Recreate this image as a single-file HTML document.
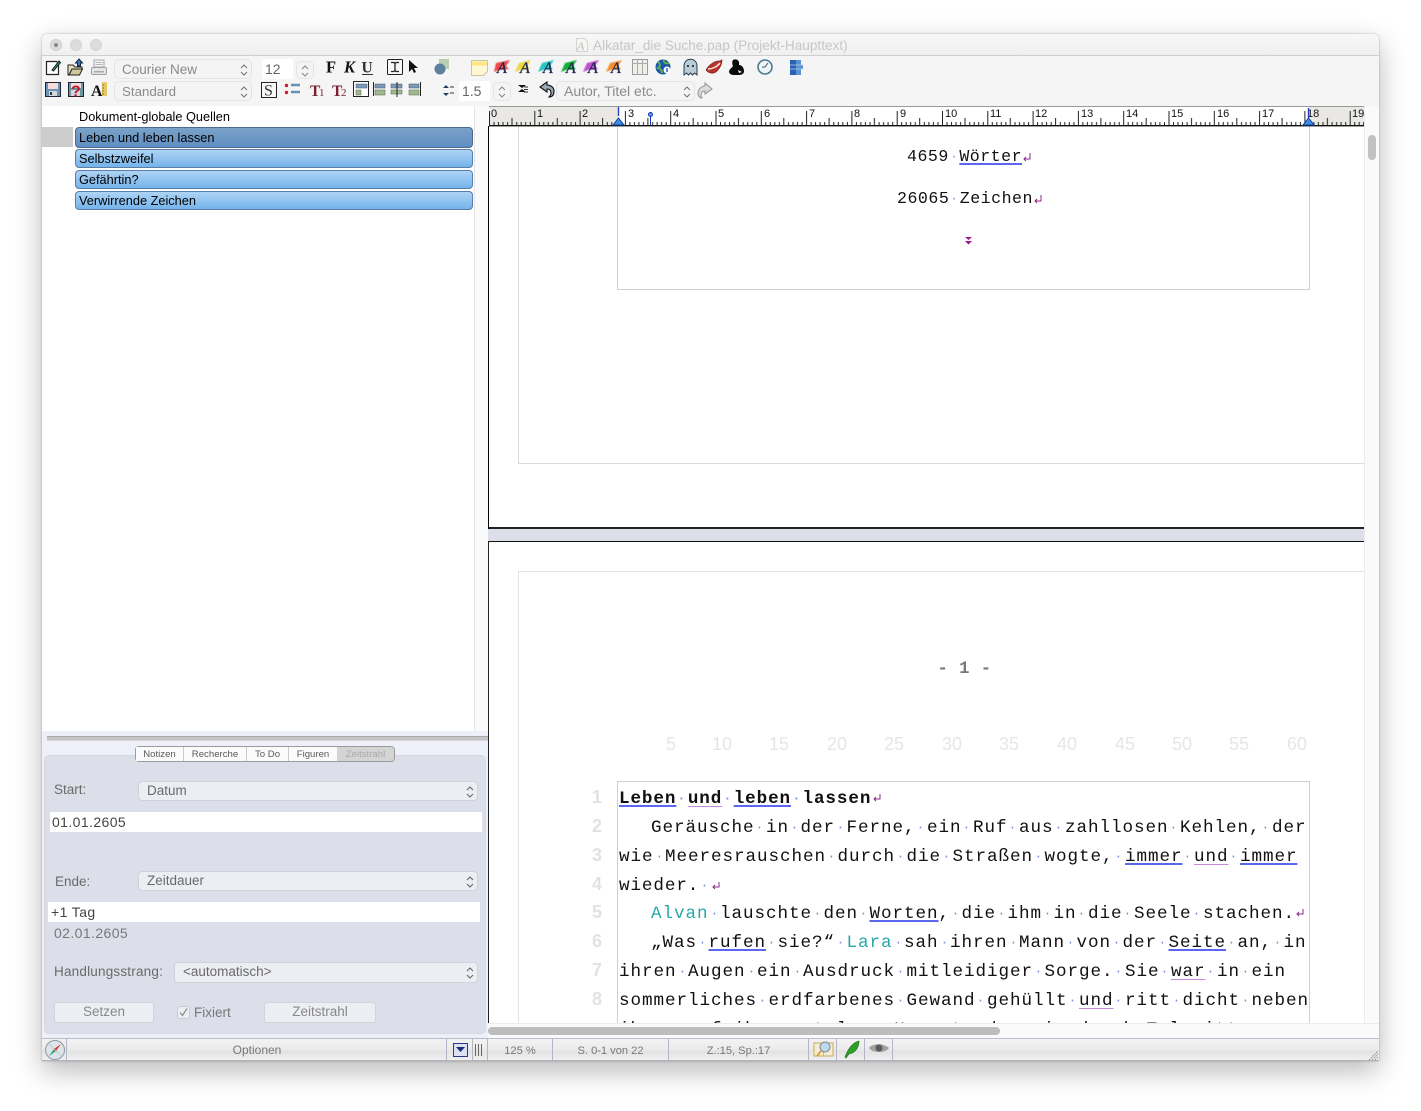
<!DOCTYPE html>
<html lang="de"><head><meta charset="utf-8"><title>Alkatar</title>
<style>
*{box-sizing:border-box}
html,body{margin:0;padding:0;width:1421px;height:1111px;background:#fff;overflow:hidden;font-family:"Liberation Sans",sans-serif}
.a{position:absolute}
#win{position:absolute;left:42px;top:34px;width:1337px;height:1027px;border-radius:5px 5px 0 0;box-shadow:0 10px 28px rgba(0,0,0,.28),0 0 2px rgba(0,0,0,.25);background:#f5f5f5}
.sel{position:absolute;background:#f4f4f4;border:1px solid #e4e4e4;border-radius:5px;color:#8a8a8a;font-size:14px;line-height:18px;padding-left:7px;white-space:nowrap}
.sel2{position:absolute;background:#eceef4;border:1px solid #cfd1db;border-radius:4px;color:#6a6a6a;font-size:13.5px;line-height:18px;padding-left:8px;white-space:nowrap}
.arr{position:absolute;right:2px;top:1px;width:10px;height:18px}
.sel2 .arr{right:2px}
.item{position:absolute;left:75px;width:398px;height:19px;border-radius:4px;border:1px solid #5a7ea6;background:linear-gradient(#aed4f4,#74b3ec);font-size:12.75px;line-height:17px;padding-left:3px;color:#000}
.lbl{position:absolute;font-size:13.5px;color:#6b6b6b;white-space:nowrap;line-height:16px}
.tab{position:absolute;top:747px;height:14px;font-size:9.6px;line-height:15px;color:#5a5a5a;text-align:center;background:#fbfbfb;border-right:1px solid #ccc}
.btn{position:absolute;background:#eceef3;border:1px solid #d2d3dc;border-radius:3px;color:#888;font-size:13.5px;line-height:18px;text-align:center}
.st{position:absolute;top:1044px;font-size:11.1px;line-height:14px;color:#777;text-align:center;white-space:nowrap}
.l{position:absolute;left:619px;height:20px;line-height:20px;font-family:"Liberation Mono",monospace;font-size:17.6px;letter-spacing:.91px;color:#111;white-space:pre}
.l i{font-style:normal;color:#6f96d8;display:inline-block;transform:scale(.72)}
.b{text-decoration:underline #5b68ee 2.4px;text-underline-offset:2px;text-decoration-skip-ink:none}
.p{text-decoration:underline #c58ad8 1px;text-underline-offset:3px;text-decoration-skip-ink:none}
.c{color:#2aa8a8}
.n{position:absolute;width:24px;left:585px;text-align:center;font-size:18px;font-weight:bold;color:#e2e2e2;line-height:20px}
.m{position:absolute;top:734px;font-size:18px;color:#e6e6e6;line-height:20px;transform:translateX(-50%)}
.r{font:11px "Liberation Sans",sans-serif;fill:#111}
.aa{font:italic 16px "Liberation Serif",serif;fill:#1c2850;stroke:#1c2850;stroke-width:.3}
</style></head><body>
<div id="win"></div>

<!-- title bar -->
<div class="a" style="left:42px;top:34px;width:1337px;height:22px;border-radius:5px 5px 0 0;background:linear-gradient(#f7f7f7,#f0f0f0);border-bottom:1px solid #cfcfcf"></div>
<div class="a" style="left:50px;top:39px;width:12px;height:12px;border-radius:50%;background:#dcdcdc;border:1px solid #d0d0d0"></div>
<div class="a" style="left:54px;top:43px;width:4px;height:4px;border-radius:50%;background:#888"></div>
<div class="a" style="left:70px;top:39px;width:12px;height:12px;border-radius:50%;background:#dcdcdc;border:1px solid #d4d4d4"></div>
<div class="a" style="left:90px;top:39px;width:12px;height:12px;border-radius:50%;background:#dcdcdc;border:1px solid #d4d4d4"></div>
<div class="a" style="left:593px;top:38px;font-size:13.6px;line-height:15px;color:#c6c6c6;white-space:nowrap">Alkatar_die Suche.pap (Projekt-Haupttext)</div>
<svg class="a" style="left:574px;top:37px" width="16" height="16"><path d="M2.500 1.500h8l3 3v10h-11z" fill="#f6f6f6" stroke="#d4d4d4"/><text x="3" y="13" style="font:italic 12px 'Liberation Serif',serif" fill="#b8c8b0">A</text></svg>

<!-- toolbar controls -->
<div class="sel" style="left:114px;top:59px;width:138px;height:20px;font-size:13.5px;line-height:19px">Courier New<svg class="arr" viewBox="0 0 10 18"><path d="M2 7l3-3 3 3M2 11l3 3 3-3" fill="none" stroke="#777" stroke-width="1.1"/></svg></div>
<div class="sel" style="left:114px;top:81px;width:138px;height:20px;font-size:13.3px;line-height:19px">Standard<svg class="arr" viewBox="0 0 10 18"><path d="M2 7l3-3 3 3M2 11l3 3 3-3" fill="none" stroke="#777" stroke-width="1.1"/></svg></div>
<div class="a" style="left:262px;top:59px;width:31px;height:20px;background:#fff;font-size:14px;line-height:20px;color:#666;padding-left:3px">12</div>
<div class="sel" style="left:296px;top:61px;width:18px;height:18px;padding:0"><svg class="arr" style="right:3px;top:0" viewBox="0 0 10 18"><path d="M2 7l3-3 3 3M2 11l3 3 3-3" fill="none" stroke="#888" stroke-width="1.1"/></svg></div>
<div class="a" style="left:459px;top:81px;width:31px;height:20px;background:#fff;font-size:14px;line-height:20px;color:#666;padding-left:3px">1.5</div>
<div class="sel" style="left:493px;top:82px;width:18px;height:19px;padding:0"><svg class="arr" style="right:3px;top:0" viewBox="0 0 10 18"><path d="M2 7l3-3 3 3M2 11l3 3 3-3" fill="none" stroke="#888" stroke-width="1.1"/></svg></div>
<div class="sel" style="left:556px;top:81px;width:139px;height:20px;">Autor, Titel etc.<svg class="arr" viewBox="0 0 10 18"><path d="M2 7l3-3 3 3M2 11l3 3 3-3" fill="none" stroke="#777" stroke-width="1.1"/></svg></div>

<!-- left list -->
<div class="a" style="left:42px;top:106px;width:446px;height:625px;background:#fff"></div>
<div class="a" style="left:474px;top:106px;width:14px;height:625px;background:#fafafa;border-left:1px solid #e4e4e4"></div>
<div class="a" style="left:79px;top:109px;font-size:12.75px;line-height:15px;color:#000">Dokument-globale Quellen</div>
<div class="a" style="left:42px;top:127px;width:31px;height:20px;background:#cdcdcd"></div>
<div class="item" style="top:127px;height:21px;line-height:19px;border-color:#4d6a8c;background:linear-gradient(#7ba2c6,#5f8fc4)">Leben und leben lassen</div>
<div class="item" style="top:149px">Selbstzweifel</div>
<div class="item" style="top:170px">Gefährtin?</div>
<div class="item" style="top:191px">Verwirrende Zeichen</div>

<!-- lower left panel -->
<div class="a" style="left:42px;top:731px;width:446px;height:307px;background:#eef0f9"></div>
<div class="a" style="left:47px;top:736px;width:441px;height:5px;background:#c6c6c6;border-top:1px solid #a9a9a9;border-bottom:1px solid #d6d6dc"></div>
<div class="a" style="left:44px;top:755px;width:442px;height:279px;background:#dcdfe9;border:1px solid #d5d7e2;border-radius:5px"></div>
<div class="a" style="left:135px;top:746px;width:260px;height:16px;border:1px solid #9b9b9b;border-radius:4px;background:#fbfbfb"></div>
<div class="tab" style="left:136px;width:48px">Notizen</div>
<div class="tab" style="left:184px;width:63px">Recherche</div>
<div class="tab" style="left:247px;width:42px">To Do</div>
<div class="tab" style="left:289px;width:48px;border-right:0">Figuren</div>
<div class="tab" style="left:337px;width:57px;background:#d4d4d4;color:#aaa;border-right:0;border-radius:0 3px 3px 0">Zeitstrahl</div>

<div class="lbl" style="left:54px;top:782px">Start:</div>
<div class="sel2" style="left:138px;top:781px;width:340px;height:20px">Datum<svg class="arr" viewBox="0 0 10 18"><path d="M2 7l3-3 3 3M2 11l3 3 3-3" fill="none" stroke="#666" stroke-width="1.1"/></svg></div>
<div class="a" style="left:50px;top:812px;width:432px;height:20px;background:#fff;font-size:14px;line-height:20px;letter-spacing:.4px;color:#444;padding-left:2px">01.01.2605</div>
<div class="lbl" style="left:55px;top:874px">Ende:</div>
<div class="sel2" style="left:138px;top:871px;width:340px;height:20px">Zeitdauer<svg class="arr" viewBox="0 0 10 18"><path d="M2 7l3-3 3 3M2 11l3 3 3-3" fill="none" stroke="#666" stroke-width="1.1"/></svg></div>
<div class="a" style="left:48px;top:902px;width:432px;height:20px;background:#fff;font-size:14px;line-height:20px;letter-spacing:.4px;color:#444;padding-left:3px">+1 Tag</div>
<div class="a" style="left:54px;top:925px;font-size:14px;line-height:17px;letter-spacing:.4px;color:#777">02.01.2605</div>
<div class="lbl" style="left:54px;top:964px;letter-spacing:.2px">Handlungsstrang:</div>
<div class="sel2" style="left:174px;top:962px;width:304px;height:21px">&lt;automatisch&gt;<svg class="arr" viewBox="0 0 10 18"><path d="M2 7l3-3 3 3M2 11l3 3 3-3" fill="none" stroke="#666" stroke-width="1.1"/></svg></div>
<div class="btn" style="left:54px;top:1002px;width:100px;height:21px">Setzen</div>
<div class="a" style="left:177px;top:1006px;width:13px;height:13px;background:#eceef3;border:1px solid #c9cad4;border-radius:3px"></div>
<svg class="a" style="left:177px;top:1006px" width="13" height="13"><path d="M3 6.500l2.500 3L10 2.500" fill="none" stroke="#8a8a8a" stroke-width="1.2"/></svg>
<div class="lbl" style="left:194px;top:1005px;color:#777;font-size:13.5px">Fixiert</div>
<div class="btn" style="left:264px;top:1002px;width:112px;height:21px">Zeitstrahl</div>

<!-- status bar -->
<div class="a" style="left:42px;top:1038px;width:1337px;height:23px;background:linear-gradient(#f3f3f3 0,#ececec 45%,#e2e2e2 60%,#f1f1f1 100%);border-top:1px solid #b9bcc9;border-bottom:1px solid #b4b4be"></div>
<div class="st" style="left:200px;width:114px;top:1043px;font-size:12px;line-height:15px">Optionen</div>
<div class="st" style="left:488px;width:64px">125 %</div>
<div class="st" style="left:553px;width:115px">S. 0-1 von 22</div>
<div class="st" style="left:669px;width:139px">Z.:15, Sp.:17</div>

<!-- editor -->
<div class="a" style="left:488px;top:106px;width:891px;height:917px;background:#fff"></div>
<div class="a" style="left:1364px;top:106px;width:15px;height:917px;background:#fafafa;border-left:1px solid #ececec"></div>
<div class="a" style="left:1368px;top:135px;width:8px;height:25px;background:#c2c2c2;border-radius:4px"></div>
<div class="a" style="left:489px;top:107px;width:129px;height:18px;background:#e9e8e4"></div>
<div class="a" style="left:1309px;top:107px;width:55px;height:18px;background:#e9e8e4"></div>
<div class="a" style="left:488px;top:126px;width:1px;height:403px;background:#000"></div>
<div class="a" style="left:489px;top:527px;width:875px;height:2px;background:#222"></div>
<div class="a" style="left:488px;top:529px;width:876px;height:12px;background:#dcdfe9"></div>
<div class="a" style="left:488px;top:541px;width:876px;height:1px;background:#111"></div>
<div class="a" style="left:488px;top:542px;width:1px;height:481px;background:#222"></div>

<div class="a" style="left:518px;top:126px;width:1px;height:338px;background:#dcdcdc"></div>
<div class="a" style="left:518px;top:463px;width:846px;height:1px;background:#dcdcdc"></div>
<div class="a" style="left:617px;top:126px;width:693px;height:164px;border:1px solid #d3cfca;border-top:0"></div>
<div class="a" style="left:518px;top:571px;width:846px;height:1px;background:#e2e2e2"></div>
<div class="a" style="left:518px;top:571px;width:1px;height:452px;background:#e2e2e2"></div>
<div class="a" style="left:617px;top:781px;width:693px;height:243px;border:1px solid #d3cfca;border-bottom:0"></div>

<div class="l" style="left:907px;top:147px;font-size:16.6px;letter-spacing:.5px">4659<i>·</i><span class="b">Wörter</span></div>
<div class="l" style="left:897px;top:189px;font-size:16.6px;letter-spacing:.5px">26065<i>·</i>Zeichen</div>
<div class="a" style="left:937.500px;top:661px;font:bold 17.2px/18px 'Liberation Mono',monospace;color:#777;white-space:pre;letter-spacing:.5px">- 1 -</div>

<div class="m" style="left:671px">5</div><div class="m" style="left:722px">10</div><div class="m" style="left:779px">15</div><div class="m" style="left:837px">20</div><div class="m" style="left:894px">25</div><div class="m" style="left:952px">30</div><div class="m" style="left:1009px">35</div><div class="m" style="left:1067px">40</div><div class="m" style="left:1125px">45</div><div class="m" style="left:1182px">50</div><div class="m" style="left:1239px">55</div><div class="m" style="left:1297px">60</div>

<div class="n" style="top:787px">1</div><div class="n" style="top:816px">2</div><div class="n" style="top:845px">3</div><div class="n" style="top:874px">4</div><div class="n" style="top:902px">5</div><div class="n" style="top:931px">6</div><div class="n" style="top:960px">7</div><div class="n" style="top:989px">8</div>

<div class="l" style="top:789px;font-weight:bold"><span class="b">Leben</span><i>·</i><span class="p">und</span><i>·</i><span class="b">leben</span><i>·</i>lassen</div>
<div class="l" style="top:818px;left:651px;letter-spacing:.94px">Geräusche<i>·</i>in<i>·</i>der<i>·</i>Ferne,<i>·</i>ein<i>·</i>Ruf<i>·</i>aus<i>·</i>zahllosen<i>·</i>Kehlen,<i>·</i>der</div>
<div class="l" style="top:847px;letter-spacing:.94px">wie<i>·</i>Meeresrauschen<i>·</i>durch<i>·</i>die<i>·</i>Straßen<i>·</i>wogte,<i>·</i><span class="b">immer</span><i>·</i><span class="p">und</span><i>·</i><span class="b">immer</span></div>
<div class="l" style="top:876px">wieder.<i>·</i></div>
<div class="l" style="top:904px;left:651px;letter-spacing:.94px"><span class="c">Alvan</span><i>·</i>lauschte<i>·</i>den<i>·</i><span class="b">Worten</span>,<i>·</i>die<i>·</i>ihm<i>·</i>in<i>·</i>die<i>·</i>Seele<i>·</i>stachen.</div>
<div class="l" style="top:933px;left:651px;letter-spacing:.94px">„Was<i>·</i><span class="b">rufen</span><i>·</i>sie?“<i>·</i><span class="c">Lara</span><i>·</i>sah<i>·</i>ihren<i>·</i>Mann<i>·</i>von<i>·</i>der<i>·</i><span class="b">Seite</span><i>·</i>an,<i>·</i>in</div>
<div class="l" style="top:962px;letter-spacing:.94px">ihren<i>·</i>Augen<i>·</i>ein<i>·</i>Ausdruck<i>·</i>mitleidiger<i>·</i>Sorge.<i>·</i>Sie<i>·</i><span class="p">war</span><i>·</i>in<i>·</i>ein</div>
<div class="l" style="top:991px;letter-spacing:.94px">sommerliches<i>·</i>erdfarbenes<i>·</i>Gewand<i>·</i>gehüllt<i>·</i><span class="p">und</span><i>·</i>ritt<i>·</i>dicht<i>·</i>neben</div>
<div class="a" style="left:489px;top:1019px;width:875px;height:4px;overflow:hidden"><div class="l" style="left:130px;top:1px">ihnen<i>·</i>auf<i>·</i>ihrem<i>·</i>stolzen<i>·</i>Hengst,<i>·</i>den<i>·</i>sie<i>·</i>durch<i>·</i>Tal<i>·</i>ritt</div></div>

<!-- horizontal scrollbar -->
<div class="a" style="left:488px;top:1023px;width:891px;height:15px;background:#fafafa;border-top:1px solid #ececec"></div>
<div class="a" style="left:488px;top:1027px;width:512px;height:8px;background:#bdbdbd;border-radius:4px"></div>

<!-- svg overlay: ruler, icons, dividers -->
<svg class="a" style="left:0;top:0;pointer-events:none" width="1421" height="1111" viewBox="0 0 1421 1111">
<defs>
<pattern id="tk" x="489" y="106" width="45.3" height="20" patternUnits="userSpaceOnUse">
<path d="M.5 5V19M5 16V19M9.500 16V19M14 16V19M18.600 16V19M23 12V19M27.700 16V19M32.200 16V19M36.700 16V19M41.300 16V19" stroke="#222" stroke-width="1" fill="none"/>
</pattern>
<linearGradient id="ag" x1="0" y1="0" x2="0" y2="1"><stop offset="0" stop-color="#fff4a8"/><stop offset=".3" stop-color="#ffdf70"/><stop offset=".35" stop-color="#fff8d8"/><stop offset="1" stop-color="#fff6d0"/></linearGradient>
<filter id="bl" x="-20%" y="-20%" width="140%" height="140%"><feGaussianBlur stdDeviation=".6"/></filter>
</defs>
<!-- ruler -->
<rect x="489" y="106" width="875" height="20" fill="url(#tk)"/>
<rect x="489" y="125" width="875" height="1.4" fill="#111"/>
<rect x="489" y="106" width="875" height="1" fill="#999"/>
<g>
<text class="r" x="491" y="117">0</text><text class="r" x="537" y="117">1</text><text class="r" x="582" y="117">2</text><text class="r" x="628" y="117">3</text><text class="r" x="673" y="117">4</text><text class="r" x="718" y="117">5</text><text class="r" x="764" y="117">6</text><text class="r" x="809" y="117">7</text><text class="r" x="854" y="117">8</text><text class="r" x="900" y="117">9</text><text class="r" x="945" y="117">10</text><text class="r" x="990" y="117">11</text><text class="r" x="1035" y="117">12</text><text class="r" x="1081" y="117">13</text><text class="r" x="1126" y="117">14</text><text class="r" x="1171" y="117">15</text><text class="r" x="1217" y="117">16</text><text class="r" x="1262" y="117">17</text><text class="r" x="1307" y="117">18</text><text class="r" x="1352" y="117">19</text>
</g>
<path d="M618.500 107V116" stroke="#2a3fbf" stroke-width="1.4"/><path d="M613 125l5.500-7 5.500 7z" fill="#3a8ee6" stroke="#123e9a"/>
<path d="M1308.500 108V118" stroke="#2a3fbf" stroke-width="1.4"/><path d="M1303 125l5.500-7 5.500 7z" fill="#3a8ee6" stroke="#123e9a"/>
<circle cx="650.500" cy="114.500" r="2" fill="#5aa0f0" stroke="#1535b5"/><path d="M650.500 116.500V125" stroke="#1535b5"/>

<!-- return marks -->
<g fill="none" stroke="#8a2a8a" stroke-width="1"><path d="M1030 153v6h-6M1026 157l-2 2 2 2"/><path d="M1041 195v6h-6M1037 199l-2 2 2 2"/><path d="M880 794v5h-6M876 797l-2 2 2 2"/><path d="M719 882v5h-6M715 885l-2 2 2 2"/><path d="M1303 909v5h-6M1299 912l-2 2 2 2"/></g>
<path d="M965 237h7l-3.500 3zM965 241h7l-3.500 3.500z" fill="#a01890"/>

<!-- toolbar row 1 -->
<path d="M46.500 61.500h10l2 2v11h-12z" fill="#fff" stroke="#222" stroke-width="1.2"/><path d="M52 70l7-9 1.500 1.500-7 8.500z" fill="#3a9a55" stroke="#123"/>
<path d="M68 65h5l2 2h7v2H72l-3 6h-1z" fill="#e4e0c0" stroke="#222"/><path d="M69 75l3-6h10.500l-3 6z" fill="#cfc89a" stroke="#222"/><path d="M79 59l-3.500 4h2v3h3v-3h2z" fill="#3a7ac0" stroke="#123"/>
<rect x="94" y="60" width="10" height="7" fill="#f4f4f4" stroke="#a8a8a8"/><rect x="91.500" y="67.500" width="15" height="7" rx="1.500" fill="#e6e6e6" stroke="#a0a0a0"/><path d="M95.500 62.500h7M95.500 64.500h7" stroke="#b8b8b8"/><rect x="94" y="71" width="10" height="1.500" fill="#aaa"/>
<text x="326" y="72.500" style="font:bold 16.500px 'Liberation Serif',serif" fill="#111">F</text>
<text x="344" y="72.500" style="font:italic bold 16.500px 'Liberation Serif',serif" fill="#111">K</text>
<text x="361.500" y="72.500" style="font:bold 15.500px 'Liberation Serif',serif" fill="#333">U</text><path d="M362 74.500h11" stroke="#333"/>
<rect x="387.500" y="59.500" width="15" height="15" rx="1" fill="#f7f7f7" stroke="#222"/><path d="M391 62.500h3l1 1 1-1h3M395 63.500v7M391 71.500h3l1-1 1 1h3" fill="none" stroke="#222" stroke-width="1.300"/>
<path d="M409 60v12l3-3 2 4 2-1-2-4h4z" fill="#111"/>
<rect x="439" y="59" width="10" height="10" fill="#b8d0b0"/><circle cx="440" cy="69" r="5.500" fill="#5f7f9f"/>
<path d="M471.500 60.500h16v11l-4 4h-12z" fill="url(#ag)" stroke="#c8c8a0"/>

<g>
<path d="M496 63l14-3-4 6 3 3-10 1-5 2z" fill="#f04848" filter="url(#bl)"/><text class="aa" x="497" y="73">A</text>
<path d="M519 63l12-3-4 6 3 3-10 1-5 2z" fill="#ecd840" filter="url(#bl)"/><text class="aa" x="520" y="73">A</text>
<path d="M542 63l12-3-4 6 3 3-10 1-5 2z" fill="#28c8c0" filter="url(#bl)"/><text class="aa" x="543" y="73">A</text>
<path d="M565 63l12-3-4 6 3 3-10 1-5 2z" fill="#18b038" filter="url(#bl)"/><text class="aa" x="566" y="73">A</text>
<path d="M587 63l12-3-4 6 3 3-10 1-5 2z" fill="#c050d0" filter="url(#bl)"/><text class="aa" x="588" y="73">A</text>
<path d="M610 63l12-3-4 6 3 3-10 1-5 2z" fill="#f49030" filter="url(#bl)"/><text class="aa" x="611" y="73">A</text>
</g>
<rect x="632.500" y="59.500" width="15" height="15" fill="#f0f0ea" stroke="#999"/><path d="M632 63.500h16M637.500 60v15M642.500 60v15" stroke="#aaa"/>
<circle cx="663" cy="67" r="7.500" fill="#1d55a8"/><path d="M658 62c3 2 2 5 0 6 3 1 4 3 4 5M664 60c-1 3 3 4 5 3" fill="none" stroke="#58b058" stroke-width="2"/><circle cx="667" cy="70" r="3.500" fill="#fff"/><rect x="666.300" y="68" width="1.400" height="4" fill="#1d55a8"/>
<path d="M684 75v-9c0-9 13-9 13 0v9l-2.500-2-2 2-2-2-2 2-2-2z" fill="#b8ccd8" stroke="#2a3a4a"/><circle cx="688" cy="66" r="1" fill="#111"/><circle cx="693" cy="66" r="1" fill="#111"/>
<path d="M706 70c2-4 8-9 12-9 2 0 3 0 4-1 0 4-2 8-5 11-3 3-8 3-11-1z" fill="#b8302a" stroke="#6a1a15" stroke-width=".6"/><path d="M708 69c4 0 9-2 12-6" stroke="#f6e2da" stroke-width="1.500" fill="none"/>
<path d="M733 60c4-2 7 1 6 5 3 0 5 3 5 6 0 4-4 4-7 4-5 0-7 0-8-3 0-3 3-4 4-6-1-2-1-5 0-6z" fill="#0a0a0a"/><path d="M738 70l4 2-3 1z" fill="#fff"/>
<circle cx="765" cy="67" r="7" fill="#eef4f8" stroke="#4a7a90" stroke-width="1.600"/><path d="M765 67l3-4M765 67h-3" stroke="#355" stroke-width="1"/>
<path d="M790 60h6v15h-6z" fill="#2a62b8"/><path d="M796 60h5v5h2v4h-2v6h-5z" fill="#5a92d8"/><path d="M790 65h13M790 69h13" stroke="#bcd" stroke-width=".8"/>

<!-- toolbar row 2 -->
<rect x="45.500" y="82.500" width="15" height="14" fill="#6f93b4" stroke="#223"/><rect x="48" y="83" width="10" height="6" fill="#f4dcdc"/><rect x="49" y="91" width="8" height="5" fill="#d4d8dc"/><rect x="50" y="92" width="2" height="3" fill="#334"/>
<rect x="68.500" y="82.500" width="15" height="14" fill="#6a98a0" stroke="#223"/><rect x="71" y="83" width="10" height="5" fill="#f4dcdc"/><rect x="71" y="90" width="9" height="6" fill="#d4d8dc"/><text x="71" y="96.500" style="font:bold 16px 'Liberation Sans',sans-serif" fill="#c0162c">?</text>
<text x="91" y="96" style="font:bold 16px 'Liberation Serif',serif" fill="#111">A</text><rect x="102" y="82" width="5" height="14" fill="#e8c860"/><path d="M102 85h2M102 88h2M102 91h2M102 94h2" stroke="#775"/>
<rect x="261.500" y="82.500" width="15" height="15" fill="#f8f8f8" stroke="#222"/><text x="264" y="95.500" style="font:16px 'Liberation Serif',serif" fill="#333">S</text>
<circle cx="286.500" cy="85.500" r="1.700" fill="#d01838"/><circle cx="286.500" cy="92.500" r="1.700" fill="#d01838"/><path d="M291 85h9M291 92h9" stroke="#6a8fb0" stroke-width="2.500"/>
<text x="310" y="96" style="font:bold 15.500px 'Liberation Serif',serif" fill="#7a2030">T</text><text x="319" y="96" style="font:11px 'Liberation Serif',serif" fill="#7a2030">1</text>
<text x="332" y="96" style="font:bold 15.500px 'Liberation Serif',serif" fill="#7a2030">T</text><text x="341" y="96" style="font:11px 'Liberation Serif',serif" fill="#7a2030">2</text>
<rect x="353.500" y="81.500" width="15" height="15" fill="#fff" stroke="#222"/><rect x="356" y="84" width="11" height="4" fill="#7a9ab8" stroke="#456" stroke-width=".5"/><rect x="356" y="90" width="5" height="5" fill="#a0b890" stroke="#564" stroke-width=".5"/>
<path d="M373.500 82v14" stroke="#222"/><rect x="375" y="84" width="10" height="4" fill="#7a9ab8" stroke="#456" stroke-width=".5"/><rect x="375" y="90" width="10" height="5" fill="#a0b890" stroke="#564" stroke-width=".5"/>
<rect x="391" y="84" width="11" height="4" fill="#7a9ab8" stroke="#456" stroke-width=".5"/><rect x="391" y="90" width="11" height="4" fill="#a0b890" stroke="#564" stroke-width=".5"/><path d="M397 82v15" stroke="#222"/>
<rect x="409" y="84" width="10" height="4" fill="#7a9ab8" stroke="#456" stroke-width=".5"/><rect x="409" y="90" width="10" height="5" fill="#a0b890" stroke="#564" stroke-width=".5"/><path d="M420.500 82v14" stroke="#222"/>
<path d="M443 88l3-3 3 3zM443 90.500h10M443 93l3 3 3-3z" fill="#24405a"/><path d="M450 87h4M450 93h4" stroke="#333"/>
<path d="M518 85h8l-4 3zM518 92h8l-4-3z" fill="#111"/><path d="M524 87h4M524 89.500h4M524 92h4" stroke="#333"/>
<path d="M547 82l-7 5 7 5v-3c3 0 4 2 4 4s-1 3-2 4c4 0 5-3 5-6 0-4-4-6-7-6z" fill="#9aa8b0" stroke="#111" stroke-width="1.100"/>
<path d="M705 83l7 6-7 5v-3c-3 0-4 2-4 4 0 1 .5 2 1 3-3 0-4-3-4-5 0-4 4-7 7-7z" fill="#ddd" stroke="#999" stroke-width="1.100"/>

<!-- status bar dividers -->
<g stroke="#b4b6c4" stroke-width="1"><path d="M66.500 1039v21M446.500 1039v21M472.500 1039v21M487.500 1039v21M552.500 1039v21M668.500 1039v21M808.500 1039v21M836.500 1039v21M864.500 1039v21M892.500 1039v21"/></g>
<circle cx="55" cy="1050" r="9.500" fill="#dde4ea" stroke="#8a9aa4"/><path d="M49 1056l5-7 2 2z" fill="#2aa060"/><path d="M61 1044l-7 5 2 2z" fill="#e03a2a"/><path d="M49 1044l12 12" stroke="#b8c4cc" stroke-width=".8"/>
<rect x="453.500" y="1043.500" width="14" height="13" fill="#dce0f0" stroke="#2a3a8a"/><path d="M456 1047h9l-4.500 5z" fill="#1a2a7a"/>
<path d="M475.500 1044v12M478.500 1044v12M481.500 1044v12" stroke="#666"/>
<rect x="814" y="1043" width="19" height="13" fill="#f2eed8" stroke="#c8a860"/><path d="M823.500 1043v13" stroke="#b8b890"/><circle cx="825" cy="1047" r="5" fill="#bcd8ee" stroke="#888"/><path d="M821 1051l-4 5" stroke="#e0a030" stroke-width="2"/>
<path d="M845 1057c3-8 8-15 14-16 0 7-4 12-10 13l-3 4z" fill="#2ea02a" stroke="#1a6a1a" stroke-width=".6"/>
<path d="M869 1048c3-5 15-5 20 0-2 3-6 4-10 4s-8-1-10-4z" fill="#a0a0a0"/><circle cx="879" cy="1048" r="3.500" fill="#5a5a5a"/>
<path d="M1369 1060l9-9M1372 1060l6-6M1375 1060l3-3" stroke="#888" stroke-width="1" stroke-dasharray="1.500 1"/>
</svg>
</body></html>
